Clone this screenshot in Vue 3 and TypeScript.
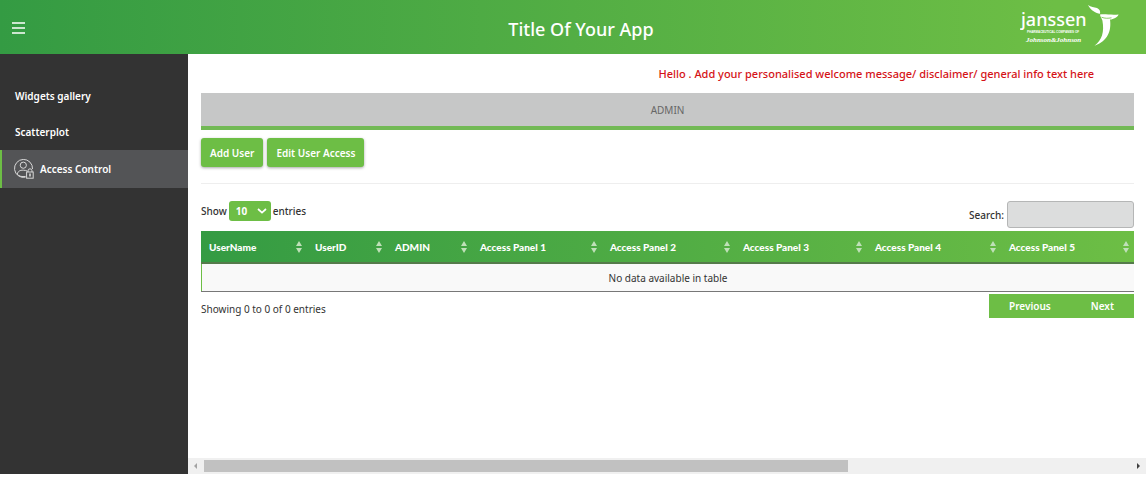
<script setup lang="ts">
import { ref } from 'vue'

interface NavItem {
  label: string
  icon: boolean
}

interface Column {
  label: string
  share: number
}

const title = 'Title Of Your App'
const navItems: NavItem[] = [
  { label: 'Widgets gallery', icon: false },
  { label: 'Scatterplot', icon: false },
  { label: 'Access Control', icon: true },
]
const active = ref('Access Control')

const columns: Column[] = [
  { label: 'UserName', share: 106 },
  { label: 'UserID', share: 80 },
  { label: 'ADMIN', share: 85 },
  { label: 'Access Panel 1', share: 130 },
  { label: 'Access Panel 2', share: 133 },
  { label: 'Access Panel 3', share: 132 },
  { label: 'Access Panel 4', share: 134 },
  { label: 'Access Panel 5', share: 133 },
]
const total = columns.reduce((sum, c) => sum + c.share, 0)
const pageSize = ref('10')
const search = ref('')
</script>

<template>
  <div class="shell">
    <header class="topbar">
      <button class="menu" type="button" aria-label="Menu">
        <svg width="14" height="14" viewBox="0 0 14 14">
          <path d="M0 2h13M0 7h13M0 12h13" stroke="#fff" stroke-width="1.6" />
        </svg>
      </button>
      <h1>{{ title }}</h1>
      <svg class="logo" width="100" height="44" viewBox="0 0 100 44" role="img" aria-label="Janssen">
        <g fill="#fff">
          <text class="brand" x="1" y="21">janssen</text>
          <text class="tiny" x="7" y="28">PHARMACEUTICAL COMPANIES OF</text>
          <text class="script" x="6" y="37">Johnson&amp;Johnson</text>
          <path d="M68 0C71 2 74 2 77 3C80 4.5 80.5 6.5 80 8.8C76 8 71 6 68 0Z" />
          <path d="M80 9.6C84 8.6 91 10.2 98.6 9.4C97.5 12.5 93.5 14 90 14.6C91.5 26 88 36 74.5 40.8C82 35 84.5 27 82.4 15.4C81.6 13.4 80.4 12 80 9.6Z" />
          <path d="M81.5 12.2C85 13.6 88 13.4 91.5 12.8" fill="none" stroke="#6dbe45" stroke-width="0.8" />
        </g>
      </svg>
    </header>

    <div class="body">
      <nav class="sidebar">
        <a
          v-for="item in navItems"
          :key="item.label"
          href="#"
          :class="['nav-item', { active: item.label === active }]"
          @click.prevent="active = item.label"
        >
          <svg v-if="item.icon" width="20" height="20" viewBox="0 0 20 20" fill="none" stroke="#d8d8d8" stroke-width="1">
            <path d="M11.5 18.2A9 9 0 1 1 18.5 10" />
            <circle cx="9.3" cy="6.2" r="3.1" />
            <path d="M3.2 15.2C4.2 11.8 6 11.2 9.3 11.2C11 11.2 12.4 11.5 13.4 12.2" />
            <path d="M3.2 15.2C5 17.3 8 18 11.6 17.4" />
            <path d="M14 13V11.8A2 2 0 0 1 18 11.8V13" />
            <rect x="12.6" y="13" width="6.6" height="6.2" />
            <path d="M16 14.6V17.6" stroke-width="1.6" />
          </svg>
          <span>{{ item.label }}</span>
        </a>
      </nav>

      <main class="main">
        <div class="content">
          <p class="welcome">Hello . Add your personalised welcome message/ disclaimer/ general info text here</p>
          <button class="tab" type="button">ADMIN</button>
          <div class="actions">
            <button type="button">Add User</button>
            <button type="button">Edit User Access</button>
          </div>

          <div class="controls">
            <label class="length">
              <span>Show</span>
              <span class="select-box">
                <select v-model="pageSize">
                  <option>10</option>
                  <option>25</option>
                  <option>50</option>
                </select>
                <svg class="chevron" width="10" height="6" viewBox="0 0 10 6" fill="none" stroke="#fff" stroke-width="1.7">
                  <path d="M1 1L5 4.6L9 1" />
                </svg>
              </span>
              <span>entries</span>
            </label>
            <label class="search">
              <span>Search:</span>
              <input v-model="search" type="text" />
            </label>
          </div>

          <table>
            <colgroup>
              <col v-for="c in columns" :key="c.label" :style="{ width: (c.share / total) * 100 + '%' }" />
            </colgroup>
            <thead>
              <tr>
                <th v-for="c in columns" :key="c.label" scope="col">
                  <div class="th">
                    <span>{{ c.label }}</span>
                    <svg width="6" height="12" viewBox="0 0 6 12" fill="#bfe0b8">
                      <path d="M3 0L6 5H0ZM0 7H6L3 12Z" />
                    </svg>
                  </div>
                </th>
              </tr>
            </thead>
            <tbody>
              <tr>
                <td :colspan="columns.length">No data available in table</td>
              </tr>
            </tbody>
          </table>

          <div class="footer">
            <span class="info">Showing 0 to 0 of 0 entries</span>
            <div class="pager">
              <button type="button">Previous</button>
              <button type="button">Next</button>
            </div>
          </div>
        </div>

        <div class="scrollbar" aria-hidden="true">
          <svg width="16" height="16" viewBox="0 0 16 16"><path d="M9 5V11L6 8Z" fill="#a3a3a3" /></svg>
          <div class="track"><div class="thumb"></div></div>
          <svg width="16" height="16" viewBox="0 0 16 16"><path d="M7 5V11L10 8Z" fill="#404040" /></svg>
        </div>
      </main>
    </div>
  </div>
</template>

<style>
body {
  margin: 0;
  background: #fff;
}
</style>

<style scoped>
.shell {
  display: flex;
  flex-direction: column;
  min-height: calc(100vh - 25px);
  font-family: "Noto Sans", "Open Sans", sans-serif;
  font-size: 10px;
  line-height: 16px;
  color: #333;
}
.shell *,
.shell {
  box-sizing: border-box;
}
button,
input,
select {
  font: inherit;
  border: 0;
  margin: 0;
}
button {
  cursor: pointer;
}
.topbar {
  display: grid;
  grid-template-columns: 1fr auto 1fr;
  align-items: center;
  height: 54px;
  padding: 0 26px 0 12px;
  background: linear-gradient(90deg, #349b43, #6dbe45 92%);
  color: #fff;
}
.menu {
  justify-self: start;
  display: flex;
  padding: 2px 0 0;
  background: none;
}
h1 {
  margin: 0;
  padding: 4px 0 0 30px;
  font-size: 18px;
  font-weight: 500;
  line-height: 24px;
}
.logo {
  justify-self: end;
}
.brand {
  font: 500 18px "Noto Sans", sans-serif;
}
.tiny {
  font: bold 3px "Liberation Sans", sans-serif;
}
.script {
  font: italic bold 7px "Liberation Serif", serif;
}
.body {
  flex: 1;
  display: flex;
}
.sidebar {
  width: 188px;
  flex: none;
  padding-top: 24px;
  background: #333;
}
.nav-item {
  display: flex;
  align-items: center;
  gap: 6px;
  height: 36px;
  padding-left: 13px;
  border-left: 2px solid transparent;
  color: #fff;
  font-weight: 600;
  text-decoration: none;
}
.nav-item.active {
  height: 38px;
  padding-left: 12px;
  background: #535456;
  border-left-color: #6dbe45;
}
.main {
  flex: 1;
  min-width: 0;
  display: flex;
  flex-direction: column;
}
.content {
  flex: 1;
  padding: 12px 12px 0 13px;
}
.welcome {
  margin: 0;
  padding-right: 40px;
  text-align: right;
  color: #d51317;
  font-size: 11px;
  font-weight: 500;
}
.tab {
  display: block;
  width: 100%;
  height: 37px;
  margin-top: 11px;
  padding: 0;
  background: #c6c7c7;
  border-bottom: 4px solid #72b955;
  color: #666;
}
.actions {
  display: flex;
  gap: 4px;
  padding: 8px 0 16px;
  border-bottom: 1px solid #eee;
}
.actions button {
  height: 29px;
  padding: 0 9px;
  border-radius: 3px;
  background: #6dbe45;
  box-shadow: 0 1px 3px rgba(0, 0, 0, 0.35);
  color: #fff;
  font-weight: 600;
}
.controls {
  display: flex;
  justify-content: space-between;
  align-items: flex-start;
  padding: 17px 0 3px;
  font-weight: 500;
}
.length {
  display: flex;
  align-items: center;
  gap: 2px;
}
.select-box {
  display: grid;
  align-items: center;
}
.select-box > * {
  grid-area: 1 / 1;
}
select {
  width: 42px;
  height: 20px;
  padding: 0 7px;
  appearance: none;
  border-radius: 3px;
  background: #6dbe45;
  color: #fff;
  font-weight: 700;
}
.chevron {
  justify-self: end;
  margin-right: 4px;
  pointer-events: none;
}
.search {
  display: flex;
  align-items: center;
  gap: 3px;
}
.search input {
  width: 127px;
  height: 27px;
  padding: 0 6px;
  border: 1px solid #b5b6b6;
  border-radius: 3px;
  background: #dcdddd;
}
table {
  width: 100%;
  table-layout: fixed;
  border-collapse: separate;
  border-spacing: 0;
  border-bottom: 1px solid #777;
}
thead {
  background: linear-gradient(90deg, #349b43, #6dbe45);
}
th {
  height: 33px;
  padding: 0 5px 0 8px;
  border-bottom: 2px solid #557b4b;
  color: #fff;
  font-family: Lato, sans-serif;
  font-weight: 900;
}
.th {
  display: flex;
  justify-content: space-between;
  align-items: center;
  white-space: nowrap;
}
td {
  height: 27px;
  padding: 0;
  border-left: 1px solid #6dbe45;
  background: #f9f9f9;
  text-align: center;
}
.footer {
  display: flex;
  justify-content: space-between;
  padding-top: 2px;
}
.info {
  padding-top: 7px;
}
.pager {
  display: flex;
  background: #6dbe45;
}
.pager button {
  height: 24px;
  padding: 0 20px;
  background: none;
  color: #fff;
  font-weight: 600;
}
.scrollbar {
  display: flex;
  align-items: center;
  height: 16px;
  background: #f0f0f0;
}
.track {
  flex: 1;
}
.thumb {
  width: 69.5%;
  height: 12px;
  background: #c1c1c1;
}
</style>
